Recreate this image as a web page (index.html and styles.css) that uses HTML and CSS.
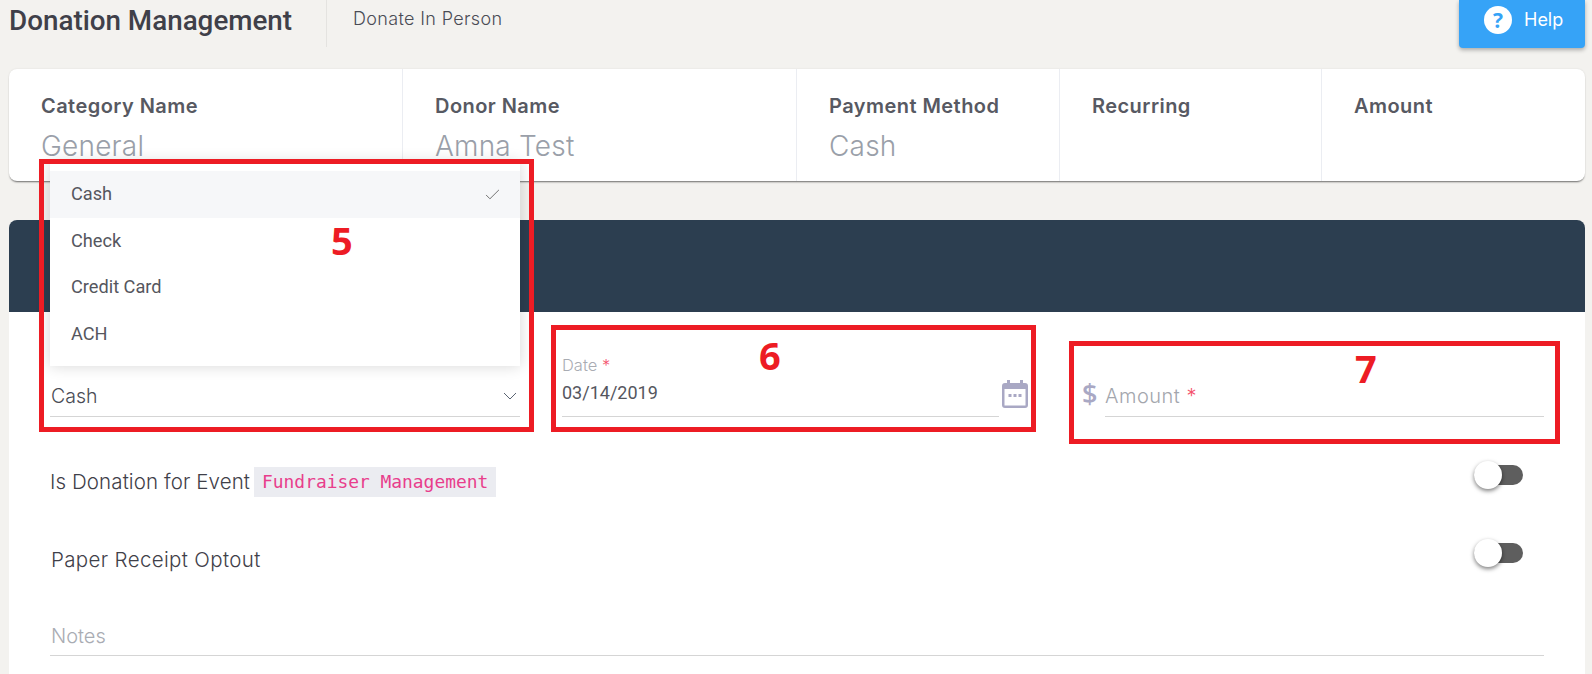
FILE: index.html
```html
<!DOCTYPE html>
<html lang="en">
<head>
<meta charset="utf-8">
<title>Donation Management</title>
<link rel="stylesheet" href="styles.css">
</head>
<body>
<div class="page">
  <header class="topbar">
    <h1 class="title">Donation Management</h1>
    <div class="crumb">Donate In Person</div>
    <button class="help"><span class="help-icon">?</span><span>Help</span></button>
  </header>

  <section class="summary">
    <div class="cell c1"><div class="cell-label">Category Name</div><div class="cell-value">General</div></div>
    <div class="cell c2"><div class="cell-label">Donor Name</div><div class="cell-value">Amna Test</div></div>
    <div class="cell c3"><div class="cell-label">Payment Method</div><div class="cell-value">Cash</div></div>
    <div class="cell c4"><div class="cell-label">Recurring</div></div>
    <div class="cell c5"><div class="cell-label">Amount</div></div>
  </section>

  <section class="panel">
    <div class="panel-head"></div>
    <div class="panel-body">
      <div class="fields">
        <div class="field f-method">
          <span class="select-value">Cash</span>
          <svg class="chevron" viewBox="0 0 14 8" width="14" height="8"><path d="M1 1l6 6 6-6" fill="none" stroke="#5a6472" stroke-width="1"/></svg>
        </div>
        <div class="f-date-wrap">
          <div class="field f-date">
            <span class="float-label">Date <i class="req">*</i></span>
            <span class="date-value">03/14/2019</span>
          </div>
          <svg class="calendar" viewBox="0 0 26 28" width="26" height="28">
            <path d="M5 0h3v3h10V0h3v3h2a3 3 0 0 1 3 3v19a3 3 0 0 1-3 3H3a3 3 0 0 1-3-3V6a3 3 0 0 1 3-3h2z" fill="#a9a8c4"/>
            <rect x="2.5" y="9" width="21" height="16.5" fill="#fff"/>
            <rect x="6.5" y="14" width="3" height="3" fill="#a9a8c4"/>
            <rect x="11.5" y="14" width="3" height="3" fill="#a9a8c4"/>
            <rect x="16.5" y="14" width="3" height="3" fill="#a9a8c4"/>
          </svg>
        </div>
        <div class="f-amount-wrap">
          <span class="dollar">$</span>
          <div class="field f-amount"><span class="placeholder-lg">Amount <i class="req">*</i></span></div>
        </div>
      </div>

      <div class="toggle-row row-event">
        <div class="toggle-text">Is Donation for Event <code class="tag">Fundraiser Management</code></div>
        <div class="switch"><span class="knob"></span></div>
      </div>
      <div class="toggle-row row-paper">
        <div class="toggle-text">Paper Receipt Optout</div>
        <div class="switch"><span class="knob"></span></div>
      </div>
      <div class="notes">Notes</div>
    </div>
  </section>

  <ul class="menu">
    <li class="menu-item selected">Cash
      <svg class="check" viewBox="0 0 16 12" width="15" height="11"><path d="M1 6.5l4.2 4.2L15 1" fill="none" stroke="#666" stroke-width="1"/></svg>
    </li>
    <li class="menu-item">Check</li>
    <li class="menu-item">Credit Card</li>
    <li class="menu-item">ACH</li>
  </ul>

  <div class="mark mark5"><span class="mark-num num5">5</span></div>
  <div class="mark mark6"><span class="mark-num num6">6</span></div>
  <div class="mark mark7"><span class="mark-num num7">7</span></div>
</div>
</body>
</html>
```
FILE: styles.css
```css
* { box-sizing: border-box; }
html, body { margin: 0; padding: 0; }
body {
  background: #f3f2ef;
  font-family: "Inter", "Noto Sans", sans-serif;
  color: #4a4c55;
  overflow: hidden;
}
.page { position: relative; width: 1592px; height: 674px; overflow: hidden; padding: 0 7px 0 9px; }

.topbar { display: flex; align-items: flex-start; height: 48px; }
.title { margin: 4px 0 0; width: 317px; height: 44px; font: 500 27.8px/34px Roboto, sans-serif; color: #3f4049; white-space: nowrap; }
.crumb { height: 47px; border-left: 1px solid #e4e3e0; padding: 8px 0 0 26px; font-weight: 300; font-size: 18px; letter-spacing: .35px; line-height: 22px; color: #4a4c55; }
.help { margin-left: auto; width: 126px; height: 48px; background: #36a3f7; border: 0; border-radius: 0 0 4px 4px; display: flex; align-items: center; padding: 0 0 8px 25px; gap: 12px; color: #fff; font: 400 18px/22px "Inter", sans-serif; box-shadow: 0 2px 4px rgba(0,0,0,.3); }
.help-icon { width: 28px; height: 28px; border-radius: 50%; background: #fff; color: #36a3f7; font: 700 21px/28px "Open Sans", sans-serif; text-align: center; }

.summary { display: flex; height: 112px; margin-top: 21px; background: #fff; border-radius: 8px; box-shadow: 0 2px 2px -1px rgba(0,0,0,.55), 0 0 2px rgba(0,0,0,.1); }
.cell { padding: 24px 0 0 32px; border-right: 1px solid #ebedf2; }
.c1 { width: 394px; }
.c2 { width: 394px; }
.c3 { width: 263px; }
.c4 { width: 262px; }
.c5 { flex: 1; border-right: 0; }
.cell-label { font-weight: 600; font-size: 20px; letter-spacing: .45px; line-height: 26px; color: #575962; white-space: nowrap; }
.cell-value { margin-top: 9px; font-weight: 300; font-size: 28px; letter-spacing: .2px; line-height: 36px; color: #9a9fa9; white-space: nowrap; }

.panel { margin-top: 39px; background: #fff; height: 460px; border-radius: 8px 8px 0 0; overflow: hidden; }
.panel-head { height: 92px; background: #2c3e50; }
.panel-body { padding: 0 41px 0 41px; }

.fields { display: flex; height: 105px; align-items: flex-end; }
.field { position: relative; height: 60px; border-bottom: 1px solid #d5d5d5; }
.f-method { width: 470px; padding-top: 27px; }
.select-value { display: block; padding-left: 1px; font-size: 19.5px; line-height: 24px; font-weight: 300; color: #4a4c55; }
.chevron { position: absolute; right: 3px; top: 35px; }
.f-date-wrap { display: flex; align-items: flex-end; width: 466px; margin-left: 42px; gap: 3px; }
.f-date { flex: 1; height: 62px; padding-top: 0; }
.float-label { display: block; font-size: 16.5px; line-height: 20px; font-weight: 300; color: #a9acb3; }
.req { font-style: normal; color: #f4516c; }
.date-value { display: block; margin-top: 6px; font: 400 18px/24px Roboto, sans-serif; color: #55565e; }
.calendar { flex: none; margin-bottom: 9px; }
.f-amount-wrap { display: flex; align-items: flex-end; width: 462px; margin-left: 54px; }
.dollar { flex: none; width: 23px; margin-bottom: 5px; font: 600 27px/36px "Open Sans", sans-serif; color: #a9a8c4; }
.f-amount { flex: 1; padding-top: 27px; }
.placeholder-lg { font-size: 20px; letter-spacing: .5px; line-height: 24px; font-weight: 300; color: #a3a6ad; }

.toggle-row { position: relative; display: flex; justify-content: space-between; align-items: center; }
.row-event { height: 30px; margin-top: 50px; }
.row-paper { height: 30px; margin-top: 47px; }
.toggle-text { display: flex; align-items: center; gap: 4px; font-size: 20.5px; letter-spacing: .1px; font-weight: 300; color: #3f4049; white-space: nowrap; }
.row-paper .toggle-text { letter-spacing: .35px; padding-left: 1px; }
.row-event .toggle-text { line-height: 28px; }
.tag { height: 30px; display: block; padding: 0 8px; background: #ebecf1; color: #e83e8c; font: 400 17.9px/30px "DejaVu Sans Mono", monospace; letter-spacing: 0; }
.switch { position: relative; top: -7px; width: 49px; height: 20px; margin-right: 21px; background: #5e5e5e; border-radius: 10px; }
.row-paper .switch { top: -6px; }
.knob { position: absolute; left: 0; top: -4px; width: 28px; height: 28px; border-radius: 50%; background: #fff; box-shadow: 0 2px 4px rgba(0,0,0,.5); }
.notes { margin-top: 50px; height: 32px; padding-left: 1px; border-bottom: 1px solid #d5d5d5; font-size: 20px; line-height: 24px; font-weight: 300; color: #a9acb3; }

.menu { position: absolute; z-index: 5; left: 50px; top: 162px; width: 470px; height: 204px; margin: 0; padding: 9px 0 0; list-style: none; background: #fff; box-shadow: 0 0 14px rgba(0,0,0,.16); }
.menu-item { position: relative; height: 46.5px; padding-left: 21px; font: 400 18.2px/46px Roboto, sans-serif; color: #55565e; }
.selected { background: #f6f7f9; }
.check { position: absolute; right: 20px; top: 18px; }

.mark { position: absolute; z-index: 6; border: 5px solid #ed1c24; }
.mark5 { left: 39px; top: 159px; width: 495px; height: 273px; }
.mark6 { left: 551px; top: 325px; width: 485px; height: 107px; }
.mark7 { left: 1069px; top: 341px; width: 491px; height: 103px; }
.mark-num { position: absolute; font: 700 38px/40px "Open Sans", sans-serif; color: #ed1c24; }
.num5 { left: 287px; top: 56px; }
.num6 { left: 203px; top: 5px; }
.num7 { left: 281px; top: 2px; }
```
